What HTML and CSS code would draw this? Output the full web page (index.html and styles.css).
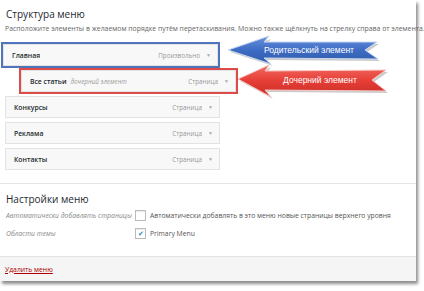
FILE: index.html
```html
<!DOCTYPE html>
<html lang="ru">
<head>
    <meta charset="UTF-8">
    <title>Меню</title>
    <link rel="stylesheet" href="styles.css">
</head>
<body>
    <div class="panel">
        <!-- Menu structure -->
        <div class="structure">
            <h2 class="title">Структура меню</h2>
            <p class="desc">Расположите элементы в желаемом порядке путём перетаскивания. Можно также щёлкнуть на стрелку справа от элемента.</p>
            <ul class="menu-items">
                <li class="item hl-blue"><b>Главная</b><span class="type">Произвольно</span><span class="caret">▼</span></li>
                <li class="item child hl-red"><b>Все статьи</b><i class="sub">дочерний элемент</i><span class="type">Страница</span><span class="caret">▼</span></li>
                <li class="item"><b>Конкурсы</b><span class="type">Страница</span><span class="caret">▼</span></li>
                <li class="item"><b>Реклама</b><span class="type">Страница</span><span class="caret">▼</span></li>
                <li class="item"><b>Контакты</b><span class="type">Страница</span><span class="caret">▼</span></li>
            </ul>
        </div>

        <!-- Menu settings -->
        <div class="settings">
            <h3 class="title">Настройки меню</h3>
            <div class="row">
                <span class="row-label">Автоматически добавлять страницы</span>
                <span class="check"></span>
                <span>Автоматически добавлять в это меню новые страницы верхнего уровня</span>
            </div>
            <div class="row">
                <span class="row-label">Области темы</span>
                <span class="check checked">✔</span>
                <span>Primary Menu</span>
            </div>
        </div>

        <div class="footer">
            <a href="#" class="delete">Удалить меню</a>
        </div>
    </div>

    <!-- Annotation arrows -->
    <svg class="arrows" width="424" height="291" viewBox="0 0 424 291">
        <defs>
            <linearGradient id="blue" x1="0" y1="0" x2="0" y2="1">
                <stop offset="0" stop-color="#6a93dc"/>
                <stop offset="0.5" stop-color="#3d6cc4"/>
                <stop offset="1" stop-color="#2f5aa8"/>
            </linearGradient>
            <linearGradient id="red" x1="0" y1="0" x2="0" y2="1">
                <stop offset="0" stop-color="#f26a62"/>
                <stop offset="0.5" stop-color="#e53e36"/>
                <stop offset="1" stop-color="#c92d27"/>
            </linearGradient>
        </defs>
        <polygon class="shadow" points="230,52 271,39 266,45 379,44 367,52 380,61 266,60 273,66"/>
        <polygon points="228,50 269,36 264,42 377,42 365,50 378,59 264,58 271,64" fill="url(#blue)" stroke="#c9d8f2" stroke-width="1"/>
        <text x="309" y="52.5" class="arrow-text">Родительский элемент</text>
        <polygon class="shadow" points="240,81 271,67 267,73 388,72 374,82 388,93 267,92 273,99"/>
        <polygon points="238,79 269,65 265,71 386,70 372,80 386,91 265,90 271,97" fill="url(#red)" stroke="#f7c9c6" stroke-width="1"/>
        <text x="320" y="83" class="arrow-text">Дочерний элемент</text>
    </svg>
</body>
</html>
```

FILE: styles.css
```css
body {
    margin: 0;
    background: #fff;
    font-family: "Open Sans", "Liberation Sans", sans-serif;
    color: #444;
    position: relative;
    width: 424px;
    height: 291px;
    overflow: hidden;
}

/* Main panel with the dropped shadow */
.panel {
    width: 416px;
    height: 281px;
    background: #fff;
    box-shadow: 2px 3px 3px rgba(0, 0, 0, 0.45);
    display: flex;
    flex-direction: column;
}

.title {
    margin: 0;
    font-size: 10px;
    line-height: 14px;
    font-weight: 400;
    color: #23282d;
}

.structure {
    padding: 7px 6px 0 6px;
    border-bottom: 1px solid #e5e5e5;
    height: 176px;
}

.desc {
    margin: 3px 0 0 -1px;
    font-size: 6.9px;
    line-height: 10px;
    color: #666;
    white-space: nowrap;
}

.menu-items {
    list-style: none;
    margin: 10px 0 0 -1px;
    padding: 0;
}

.item {
    width: 215px;
    height: 22px;
    margin-bottom: 4px;
    border: 1px solid #e3e3e3;
    background: #f8f8f8;
    display: flex;
    align-items: center;
    padding: 0 6px 0 8px;
    box-sizing: border-box;
    font-size: 6.8px;
}

.item b {
    font-weight: 600;
    color: #23282d;
}

.item .sub {
    margin-left: 4px;
    color: #999;
    font-size: 6.3px;
}

.item .type {
    margin-left: auto;
    color: #999;
    font-size: 6.3px;
}

.item .caret {
    margin-left: 6px;
    color: #aaa;
    font-size: 5px;
}

.child {
    margin-left: 16px;
}

.hl-blue {
    outline: 2px solid #4f74bb;
    margin-left: -2px;
}

.hl-red {
    outline: 2px solid #dc4b48;
}

.settings {
    padding: 8px 6px 0 6px;
    flex: 1;
}

.row {
    display: flex;
    align-items: center;
    height: 18px;
    font-size: 6.8px;
    color: #555;
}

.row-label {
    width: 129px;
    font-style: italic;
    color: #888;
}

.check {
    width: 9px;
    height: 9px;
    border: 1px solid #bbb;
    background: #fff;
    margin-right: 4px;
    font-size: 7px;
    line-height: 9px;
    text-align: center;
    color: #1e8cbe;
    box-shadow: inset 0 1px 1px rgba(0, 0, 0, 0.08);
}

.footer {
    height: 24px;
    background: #f5f5f5;
    border-top: 1px solid #e2e2e2;
    display: flex;
    align-items: center;
    padding: 0 5px;
}

.delete {
    color: #a00;
    font-size: 6.8px;
}

/* Annotation layer */
.arrows {
    position: absolute;
    left: 0;
    top: 0;
    pointer-events: none;
}

.arrows .shadow {
    fill: rgba(0, 0, 0, 0.2);
}

.arrow-text {
    fill: #fff;
    font-family: "Liberation Sans", Arial, sans-serif;
    font-size: 8.5px;
    text-anchor: middle;
}
```
